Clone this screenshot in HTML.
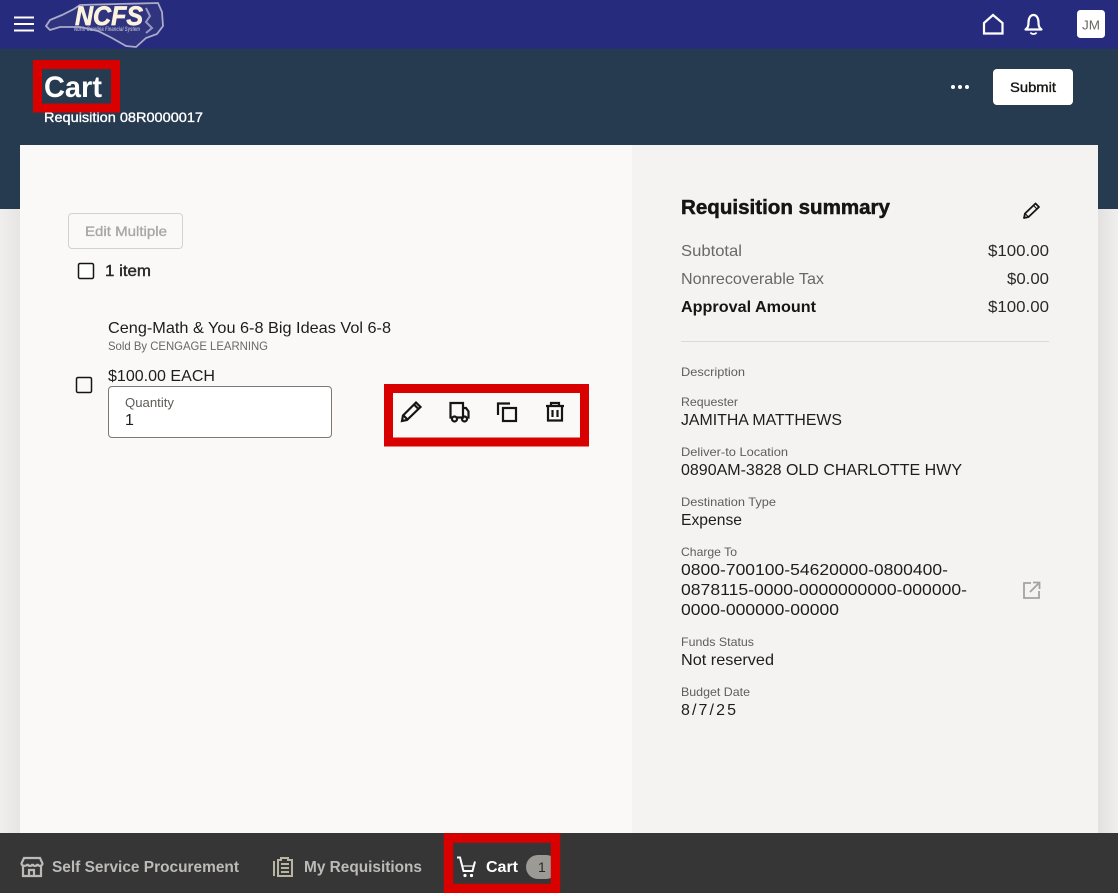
<!DOCTYPE html>
<html lang="en">
<head>
<meta charset="utf-8">
<title>Cart</title>
<style>
html,body{margin:0;padding:0;width:1118px;height:893px;overflow:hidden;background:#f0eeec}
svg{display:block;position:absolute;left:0;top:0}
text{font-family:"Liberation Sans",sans-serif}
.b{font-weight:700}
.lab{font-size:12px;fill:#5f5c59}
.val{font-size:16px;fill:#1f1d1b}
.ic{fill:none;stroke:#161513;stroke-width:2.200;stroke-linejoin:miter}
</style>
</head>
<body>
<svg width="1118" height="893" viewBox="0 0 1118 893" xmlns="http://www.w3.org/2000/svg">
  <defs>
    <linearGradient id="lm" x1="0" x2="1" y1="0" y2="0"><stop offset="0" stop-color="#f0efed"/><stop offset="1" stop-color="#e6e5e3"/></linearGradient>
    <linearGradient id="rm" x1="0" x2="1" y1="0" y2="0"><stop offset="0" stop-color="#e2e1df"/><stop offset="1" stop-color="#f0efed"/></linearGradient>
  </defs>
  <!-- backgrounds -->
  <rect x="0" y="0" width="1118" height="49" fill="#272b7e"/>
  <rect x="0" y="49" width="1118" height="160" fill="#263a50"/>
  <rect x="0" y="209" width="20" height="624" fill="url(#lm)"/>
  <rect x="1098" y="209" width="20" height="624" fill="url(#rm)"/>
  <rect x="20" y="145" width="612" height="688" fill="#fbf9f8"/>
  <rect x="632" y="145" width="466" height="688" fill="#f5f3f2"/>
  <rect x="0" y="833" width="1118" height="60" fill="#363636"/>

  <!-- hamburger -->
  <path d="M14 17.500H34M14 24H34M14 30.500H34" stroke="#fff" stroke-width="2" fill="none"/>

  <!-- logo -->
  <path d="M46 26L50 20L62 15L74 9L80 5L158 3L162 12L163 26L157 34L146 38L136 47L126 46L112 38L98 31L80 27L60 27L50 30Z" fill="#30347f" stroke="#a9abc9" stroke-width="1.800"/>
  <path d="M146 8L150 16L146 22L152 28L146 33" fill="none" stroke="#9698bf" stroke-width="2"/>
  <text x="75" y="25" class="b" font-size="27" font-style="italic" fill="#fbf3dc" stroke="#fbf3dc" stroke-width=".7" textLength="68" lengthAdjust="spacingAndGlyphs">NCFS</text>
  <text x="74" y="31" class="b" font-size="6" font-style="italic" fill="#a9abc9" textLength="66" lengthAdjust="spacingAndGlyphs">North Carolina Financial System</text>

  <!-- top right icons -->
  <path d="M984 33.500V23L993 15L1002.500 23V33.500Z" fill="none" stroke="#fff" stroke-width="2.200" stroke-linejoin="miter"/>
  <path d="M1025.500 29.500C1028 27.500 1028.500 26 1028.500 22.500C1028.500 18 1030.500 15 1033.500 15C1036.500 15 1038.500 18 1038.500 22.500C1038.500 26 1039 27.500 1041.500 29.500Z" fill="none" stroke="#fff" stroke-width="2.200" stroke-linejoin="round"/>
  <path d="M1030.500 32.500C1031.500 34.500 1035.500 34.500 1036.500 32.500" fill="none" stroke="#fff" stroke-width="1.800"/>
  <rect x="1077" y="10" width="28" height="28" rx="3.500" fill="#fff"/>
  <text x="1082" y="29.500" font-size="13" fill="#6a6764" textLength="18" lengthAdjust="spacingAndGlyphs">JM</text>

  <!-- page header -->
  <text x="44" y="97" class="b" font-size="30" fill="#fff" textLength="58" lengthAdjust="spacingAndGlyphs">Cart</text>
  <text x="44" y="122" font-size="14" fill="#fff" stroke="#fff" stroke-width=".35" textLength="159" lengthAdjust="spacingAndGlyphs">Requisition 08R0000017</text>
  <rect x="37.500" y="64.500" width="78" height="43.500" fill="none" stroke="#d90000" stroke-width="9"/>
  <circle cx="953" cy="87" r="2" fill="#fff"/><circle cx="960" cy="87" r="2" fill="#fff"/><circle cx="967" cy="87" r="2" fill="#fff"/>
  <rect x="993" y="69" width="80" height="36" rx="4" fill="#fff"/>
  <text x="1010" y="92" font-size="14" fill="#161513" stroke="#161513" stroke-width=".35" textLength="46" lengthAdjust="spacingAndGlyphs">Submit</text>

  <!-- left column -->
  <rect x="68.500" y="213.500" width="114" height="35" rx="3.500" fill="none" stroke="#d4d2cf"/>
  <text x="85" y="236" font-size="14" fill="#a9a7a4" stroke="#a9a7a4" stroke-width=".35" textLength="82" lengthAdjust="spacingAndGlyphs">Edit Multiple</text>
  <rect x="78.500" y="263.500" width="15" height="15" rx="1.500" fill="#fff" stroke="#161513" stroke-width="1.500"/>
  <text x="105" y="276" font-size="15.500" fill="#2b2927" stroke="#2b2927" stroke-width=".4" textLength="46" lengthAdjust="spacingAndGlyphs">1 item</text>
  <text x="108" y="333" font-size="16" fill="#1f1d1b" textLength="283" lengthAdjust="spacingAndGlyphs">Ceng-Math &amp; You 6-8 Big Ideas Vol 6-8</text>
  <text x="108" y="350" font-size="12" fill="#6a6764" textLength="160" lengthAdjust="spacingAndGlyphs">Sold By CENGAGE LEARNING</text>
  <text x="108" y="381" font-size="16" fill="#1f1d1b" textLength="107" lengthAdjust="spacingAndGlyphs">$100.00 EACH</text>
  <rect x="76.500" y="377.500" width="15" height="15" rx="1.500" fill="#fbf9f8" stroke="#161513" stroke-width="1.500"/>
  <rect x="108.500" y="386.500" width="223" height="51" rx="3.500" fill="#fff" stroke="#7b7875"/>
  <text x="125" y="407" font-size="12.500" fill="#5f5c59" textLength="49" lengthAdjust="spacingAndGlyphs">Quantity</text>
  <text x="125" y="425" font-size="16" fill="#1f1d1b">1</text>

  <!-- action icons -->
  <rect x="388.500" y="388.500" width="196" height="53.500" fill="#fbf9f8" stroke="#d90000" stroke-width="9"/>
  <path class="ic" d="M402 421L403 415.500L416 402.500L420.500 407L407 420Z"/>
  <path class="ic" d="M403.500 415.500L407.500 419.500M414 404.500L418.500 409" stroke-width="1.500"/>
  <path class="ic" d="M452 417.500H450.500V403H463V417.500H457M463 408H466L468.500 411.500V417.500H467.500M463 417.500H461.500"/>
  <circle class="ic" cx="454.500" cy="419" r="2.500"/>
  <circle class="ic" cx="464.500" cy="419" r="2.500"/>
  <path class="ic" d="M498 415V403.500H510"/>
  <rect class="ic" x="503" y="408" width="13" height="13"/>
  <path class="ic" d="M546 406H564M551 406V403H559V406M548 406V420.500H562V406M552.500 410V417M557.500 410V417"/>

  <!-- summary -->
  <text x="681" y="214" class="b" font-size="20" fill="#161513" stroke="#161513" stroke-width=".5" textLength="209" lengthAdjust="spacingAndGlyphs">Requisition summary</text>
  <path d="M1024 218L1025 213.500L1035.500 203.500L1039 207L1028.500 217Z" fill="none" stroke="#161513" stroke-width="1.800" stroke-linejoin="round"/>
  <path d="M1025 213.500L1028.500 217M1033.500 205.500L1037 209" fill="none" stroke="#161513" stroke-width="1.200"/>
  <text x="681" y="256" font-size="16" fill="#6a6764" textLength="61" lengthAdjust="spacingAndGlyphs">Subtotal</text>
  <text x="988" y="256" font-size="16" fill="#2b2927" textLength="61" lengthAdjust="spacingAndGlyphs">$100.00</text>
  <text x="681" y="284" font-size="16" fill="#6a6764" textLength="143" lengthAdjust="spacingAndGlyphs">Nonrecoverable Tax</text>
  <text x="1007" y="284" font-size="16" fill="#2b2927" textLength="42" lengthAdjust="spacingAndGlyphs">$0.00</text>
  <text x="681" y="312" class="b" font-size="16" fill="#161513" textLength="135" lengthAdjust="spacingAndGlyphs">Approval Amount</text>
  <text x="988" y="312" font-size="16" fill="#2b2927" textLength="61" lengthAdjust="spacingAndGlyphs">$100.00</text>
  <rect x="681" y="341" width="368" height="1" fill="#dcdad7"/>

  <text x="681" y="376" class="lab" textLength="64" lengthAdjust="spacingAndGlyphs">Description</text>
  <text x="681" y="406" class="lab" textLength="57" lengthAdjust="spacingAndGlyphs">Requester</text>
  <text x="681" y="425" class="val" textLength="161" lengthAdjust="spacingAndGlyphs">JAMITHA MATTHEWS</text>
  <text x="681" y="456" class="lab" textLength="107" lengthAdjust="spacingAndGlyphs">Deliver-to Location</text>
  <text x="681" y="475" class="val" textLength="281" lengthAdjust="spacingAndGlyphs">0890AM-3828 OLD CHARLOTTE HWY</text>
  <text x="681" y="506" class="lab" textLength="95" lengthAdjust="spacingAndGlyphs">Destination Type</text>
  <text x="681" y="525" class="val" textLength="61" lengthAdjust="spacingAndGlyphs">Expense</text>
  <text x="681" y="556" class="lab" textLength="56" lengthAdjust="spacingAndGlyphs">Charge To</text>
  <text x="681" y="575" class="val" textLength="267" lengthAdjust="spacingAndGlyphs">0800-700100-54620000-0800400-</text>
  <text x="681" y="595" class="val" textLength="286" lengthAdjust="spacingAndGlyphs">0878115-0000-0000000000-000000-</text>
  <text x="681" y="615" class="val" textLength="158" lengthAdjust="spacingAndGlyphs">0000-000000-00000</text>
  <path d="M1031 583H1024V598H1039V591M1030 592L1039 583M1033 582.500H1039.500V589" fill="none" stroke="#a5a3a0" stroke-width="1.800"/>
  <text x="681" y="646" class="lab" textLength="73" lengthAdjust="spacingAndGlyphs">Funds Status</text>
  <text x="681" y="665" class="val" textLength="93" lengthAdjust="spacingAndGlyphs">Not reserved</text>
  <text x="681" y="696" class="lab" textLength="69" lengthAdjust="spacingAndGlyphs">Budget Date</text>
  <text x="681" y="715" class="val" textLength="55" lengthAdjust="spacing">8/7/25</text>

  <!-- bottom nav -->
  <g fill="none" stroke="#bdbbb8" stroke-width="2.200">
    <path d="M23 865V876H41V865"/>
    <path d="M24 858H40L42.500 863.500C42.500 866.500 38 866.500 37.500 864C37 866.500 33 866.500 32.500 864C32 866.500 28 866.500 27.500 864C27 866.500 21.500 866.500 21.500 863.500Z"/>
    <path d="M29 876V870H34V876"/>
  </g>
  <text x="52" y="872" class="b" font-size="16" fill="#bdbbb8" textLength="187" lengthAdjust="spacingAndGlyphs">Self Service Procurement</text>
  <g fill="none" stroke="#b8b6a0" stroke-width="2">
    <path d="M274 861V876"/>
    <path d="M278 860H281V858H288V860H292V876H278Z"/>
    <path d="M281 864H289M281 868H289M281 872H289"/>
  </g>
  <text x="304" y="872" class="b" font-size="16" fill="#bdbbb8" textLength="118" lengthAdjust="spacingAndGlyphs">My Requisitions</text>
  <rect x="526" y="855" width="32" height="24" rx="12" fill="#9c9a94"/>
  <text x="538" y="872" font-size="14" fill="#2b2927">1</text>
  <rect x="448.500" y="838" width="107" height="50.500" fill="none" stroke="#d90000" stroke-width="9.500"/>
  <path d="M457 857.500H460L463.500 871H472.500L475 861.500" fill="none" stroke="#fff" stroke-width="2"/>
  <path d="M463 866H474" fill="none" stroke="#fff" stroke-width="1.200"/>
  <circle cx="465" cy="875.500" r="1.600" fill="#fff"/><circle cx="471.500" cy="875.500" r="1.600" fill="#fff"/>
  <text x="486" y="872" class="b" font-size="16" fill="#fff" textLength="32" lengthAdjust="spacingAndGlyphs">Cart</text>
</svg>
</body>
</html>
